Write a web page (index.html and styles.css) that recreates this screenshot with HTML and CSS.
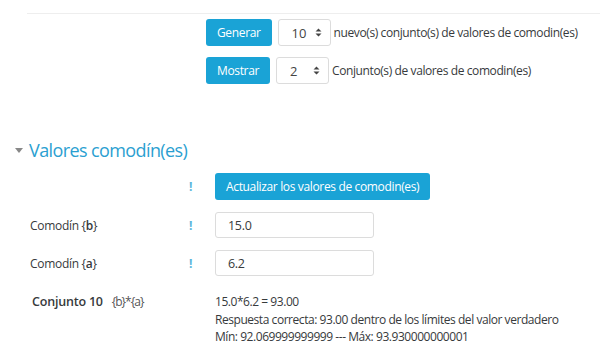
FILE: index.html
```html
<!DOCTYPE html>
<html lang="es">
<head>
    <meta charset="UTF-8">
    <title>Valores comodín(es)</title>
    <link rel="stylesheet" href="styles.css">
</head>
<body>
    <div class="rule"></div>

    <div class="generate">
        <div class="gen-row">
            <button class="btn">Generar</button>
            <div class="select"><span>10</span>
                <svg width="7" height="9" viewBox="0 0 7 9"><path d="M3.5 0.5L6.5 3.5H0.5z M3.5 8.5L0.5 5.5H6.5z" fill="#444"/></svg>
            </div>
            <span class="gen-text">nuevo(s) conjunto(s) de valores de comodin(es)</span>
        </div>
        <div class="gen-row">
            <button class="btn">Mostrar</button>
            <div class="select"><span>2</span>
                <svg width="7" height="9" viewBox="0 0 7 9"><path d="M3.5 0.5L6.5 3.5H0.5z M3.5 8.5L0.5 5.5H6.5z" fill="#444"/></svg>
            </div>
            <span class="gen-text">Conjunto(s) de valores de comodin(es)</span>
        </div>
    </div>

    <h2 class="section-title"><span class="caret"></span>Valores comodín(es)</h2>

    <div class="form">
        <div class="form-row">
            <div class="label"></div>
            <div class="req">!</div>
            <div class="control"><button class="btn">Actualizar los valores de comodin(es)</button></div>
        </div>
        <div class="form-row">
            <div class="label">Comodín {<b>b</b>}</div>
            <div class="req">!</div>
            <div class="control"><input class="input" type="text" value="15.0"></div>
        </div>
        <div class="form-row">
            <div class="label">Comodín {<b>a</b>}</div>
            <div class="req">!</div>
            <div class="control"><input class="input" type="text" value="6.2"></div>
        </div>
        <div class="form-row result">
            <div class="label"><b class="set-name">Conjunto 10</b><span class="formula">{b}*{a}</span></div>
            <div class="req"></div>
            <div class="control lines">
                <div>15.0*6.2 = 93.00</div>
                <div>Respuesta correcta: 93.00 dentro de los límites del valor verdadero</div>
                <div>Mín: 92.069999999999 --- Máx: 93.930000000001</div>
            </div>
        </div>
    </div>
</body>
</html>
```

FILE: styles.css
```css
* {
    margin: 0;
    padding: 0;
    box-sizing: border-box;
}

body {
    background: #fff;
    color: #373a3c;
    font-family: 'Open Sans', 'Liberation Sans', sans-serif;
    font-size: 12px;
    letter-spacing: -0.4px;
    width: 600px;
    height: 354px;
    overflow: hidden;
}

.rule {
    margin: 13px 0 0 27px;
    border-top: 1px solid #eeeeee;
}

.generate {
    padding-left: 206px;
    margin-top: 5px;
}

.gen-row {
    display: flex;
    align-items: center;
    height: 27px;
    margin-bottom: 11px;
}

.btn {
    background: #1aa3d6;
    color: #fff;
    border: none;
    border-radius: 3px;
    height: 27px;
    padding: 0 11px;
    font-family: inherit;
    font-size: 12px;
    letter-spacing: -0.35px;
}

.select {
    display: flex;
    align-items: center;
    justify-content: space-between;
    width: 53px;
    height: 27px;
    margin-left: 6px;
    padding: 0 8px 0 13px;
    border: 1px solid #dcdcdc;
    border-radius: 3px;
    font-size: 13px;
    letter-spacing: 0;
    color: #444;
}

.gen-text {
    margin-left: 3px;
    font-size: 12px;
}

.section-title {
    display: flex;
    align-items: center;
    margin-top: 54px;
    padding-left: 15px;
    height: 24px;
    font-size: 18px;
    font-weight: normal;
    letter-spacing: -0.6px;
    color: #2b9fd1;
}

.caret {
    width: 0;
    height: 0;
    margin-right: 6px;
    border-left: 4.5px solid transparent;
    border-right: 4.5px solid transparent;
    border-top: 5px solid #888;
}

.form {
    margin-top: 11px;
}

.form-row {
    display: grid;
    grid-template-columns: 159px 26px 1fr;
    align-items: center;
    padding-left: 30px;
    min-height: 26px;
    margin-bottom: 12px;
}

.label {
    font-size: 12px;
    letter-spacing: -0.3px;
}

.label b {
    font-weight: 600;
}

.set-name {
    margin-left: 2px;
    margin-right: 9px;
    font-size: 12.5px;
    letter-spacing: -0.2px;
}

.formula {
    font-size: 12px;
    letter-spacing: -1px;
    color: #555;
}

.req {
    color: #5bb6dc;
    font-size: 12px;
    font-weight: bold;
}

.input {
    width: 159px;
    height: 26px;
    padding: 0 12px;
    border: 1px solid #dcdcdc;
    border-radius: 3px;
    font-family: inherit;
    font-size: 12.5px;
    letter-spacing: -0.3px;
    color: #373a3c;
    outline: none;
}

.result {
    align-items: start;
    margin-top: 17px;
}

.lines {
    line-height: 17.5px;
    font-size: 12px;
    letter-spacing: -0.45px;
}
```
